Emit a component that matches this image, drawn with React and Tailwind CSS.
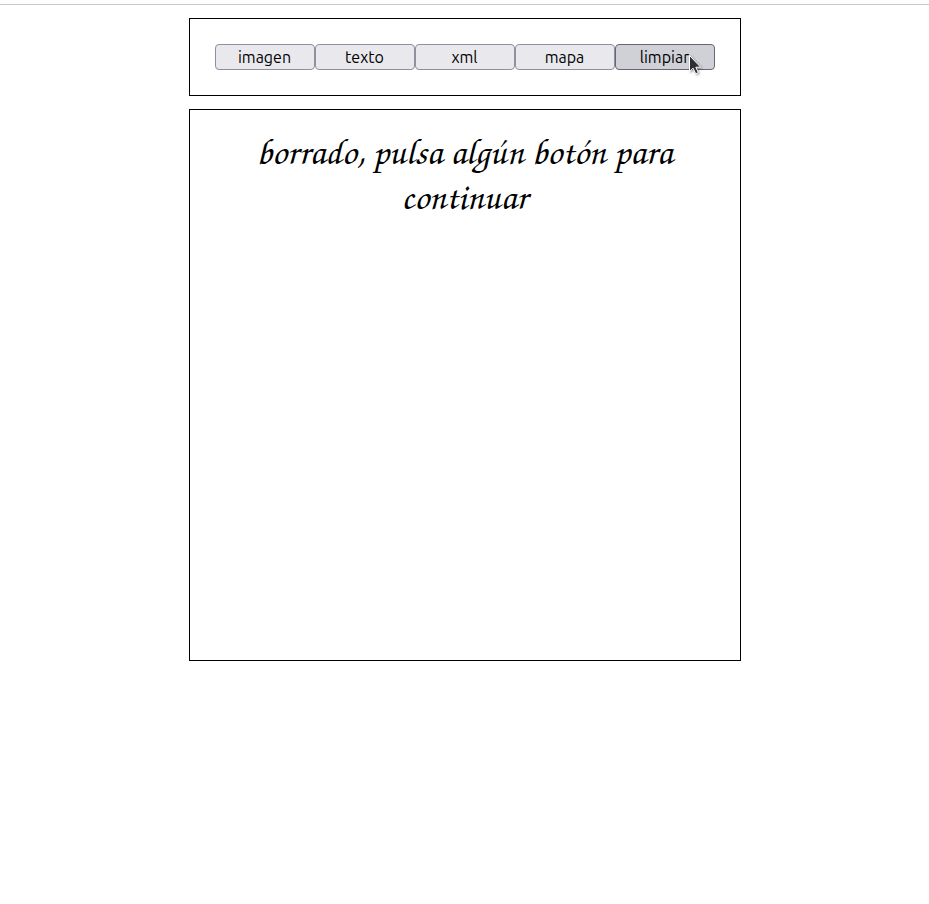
import React from "react";

const buttons = ["imagen", "texto", "xml", "mapa", "limpiar"];

function Pointer() {
  return (
    <svg
      className="pointer-events-none absolute top-2.5 left-[73px] h-6 w-4 drop-shadow-[1px_1px_1px_rgba(0,0,0,0.4)]"
      viewBox="0 0 16 24"
      aria-hidden="true"
    >
      <path
        d="M1.5 1.5v16l3.6-3.3 2.6 5.6 2.6-1.2-2.5-5.4h4.9z"
        fill="#2e2e32"
        stroke="#ffffff"
        strokeWidth="1"
      />
    </svg>
  );
}

export default function App() {
  return (
    <div className="min-h-screen bg-white pt-1 text-black">
      <hr className="border-t border-[#c8c8c8]" />
      <main className="mx-auto mt-[13px] flex max-w-[552px] flex-col gap-[13px]">
        <nav className="flex border border-black p-[25px]">
          {buttons.map((label) => (
            <div key={label} className="relative flex-1">
              <button
                type="button"
                className={
                  label === "limpiar"
                    ? "block h-[26px] w-full rounded border border-[#676774] bg-[#d0d0d7] font-[Ubuntu,'Noto_Sans',sans-serif] text-base leading-6"
                    : "block h-[26px] w-full rounded border border-[#8f8f9d] bg-[#e9e9ed] font-[Ubuntu,'Noto_Sans',sans-serif] text-base leading-6"
                }
              >
                {label}
              </button>
              {label === "limpiar" && <Pointer />}
            </div>
          ))}
        </nav>
        <section className="min-h-[552px] border border-black px-[25px] py-[18px]">
          <p className="text-center font-['URW_Chancery_L','TeX_Gyre_Chorus','Apple_Chancery','ITC_Zapf_Chancery','Zapf_Chancery','Monotype_Corsiva',cursive] text-[37px] leading-[45px]">
            borrado, pulsa algún botón para continuar
          </p>
        </section>
      </main>
    </div>
  );
}
